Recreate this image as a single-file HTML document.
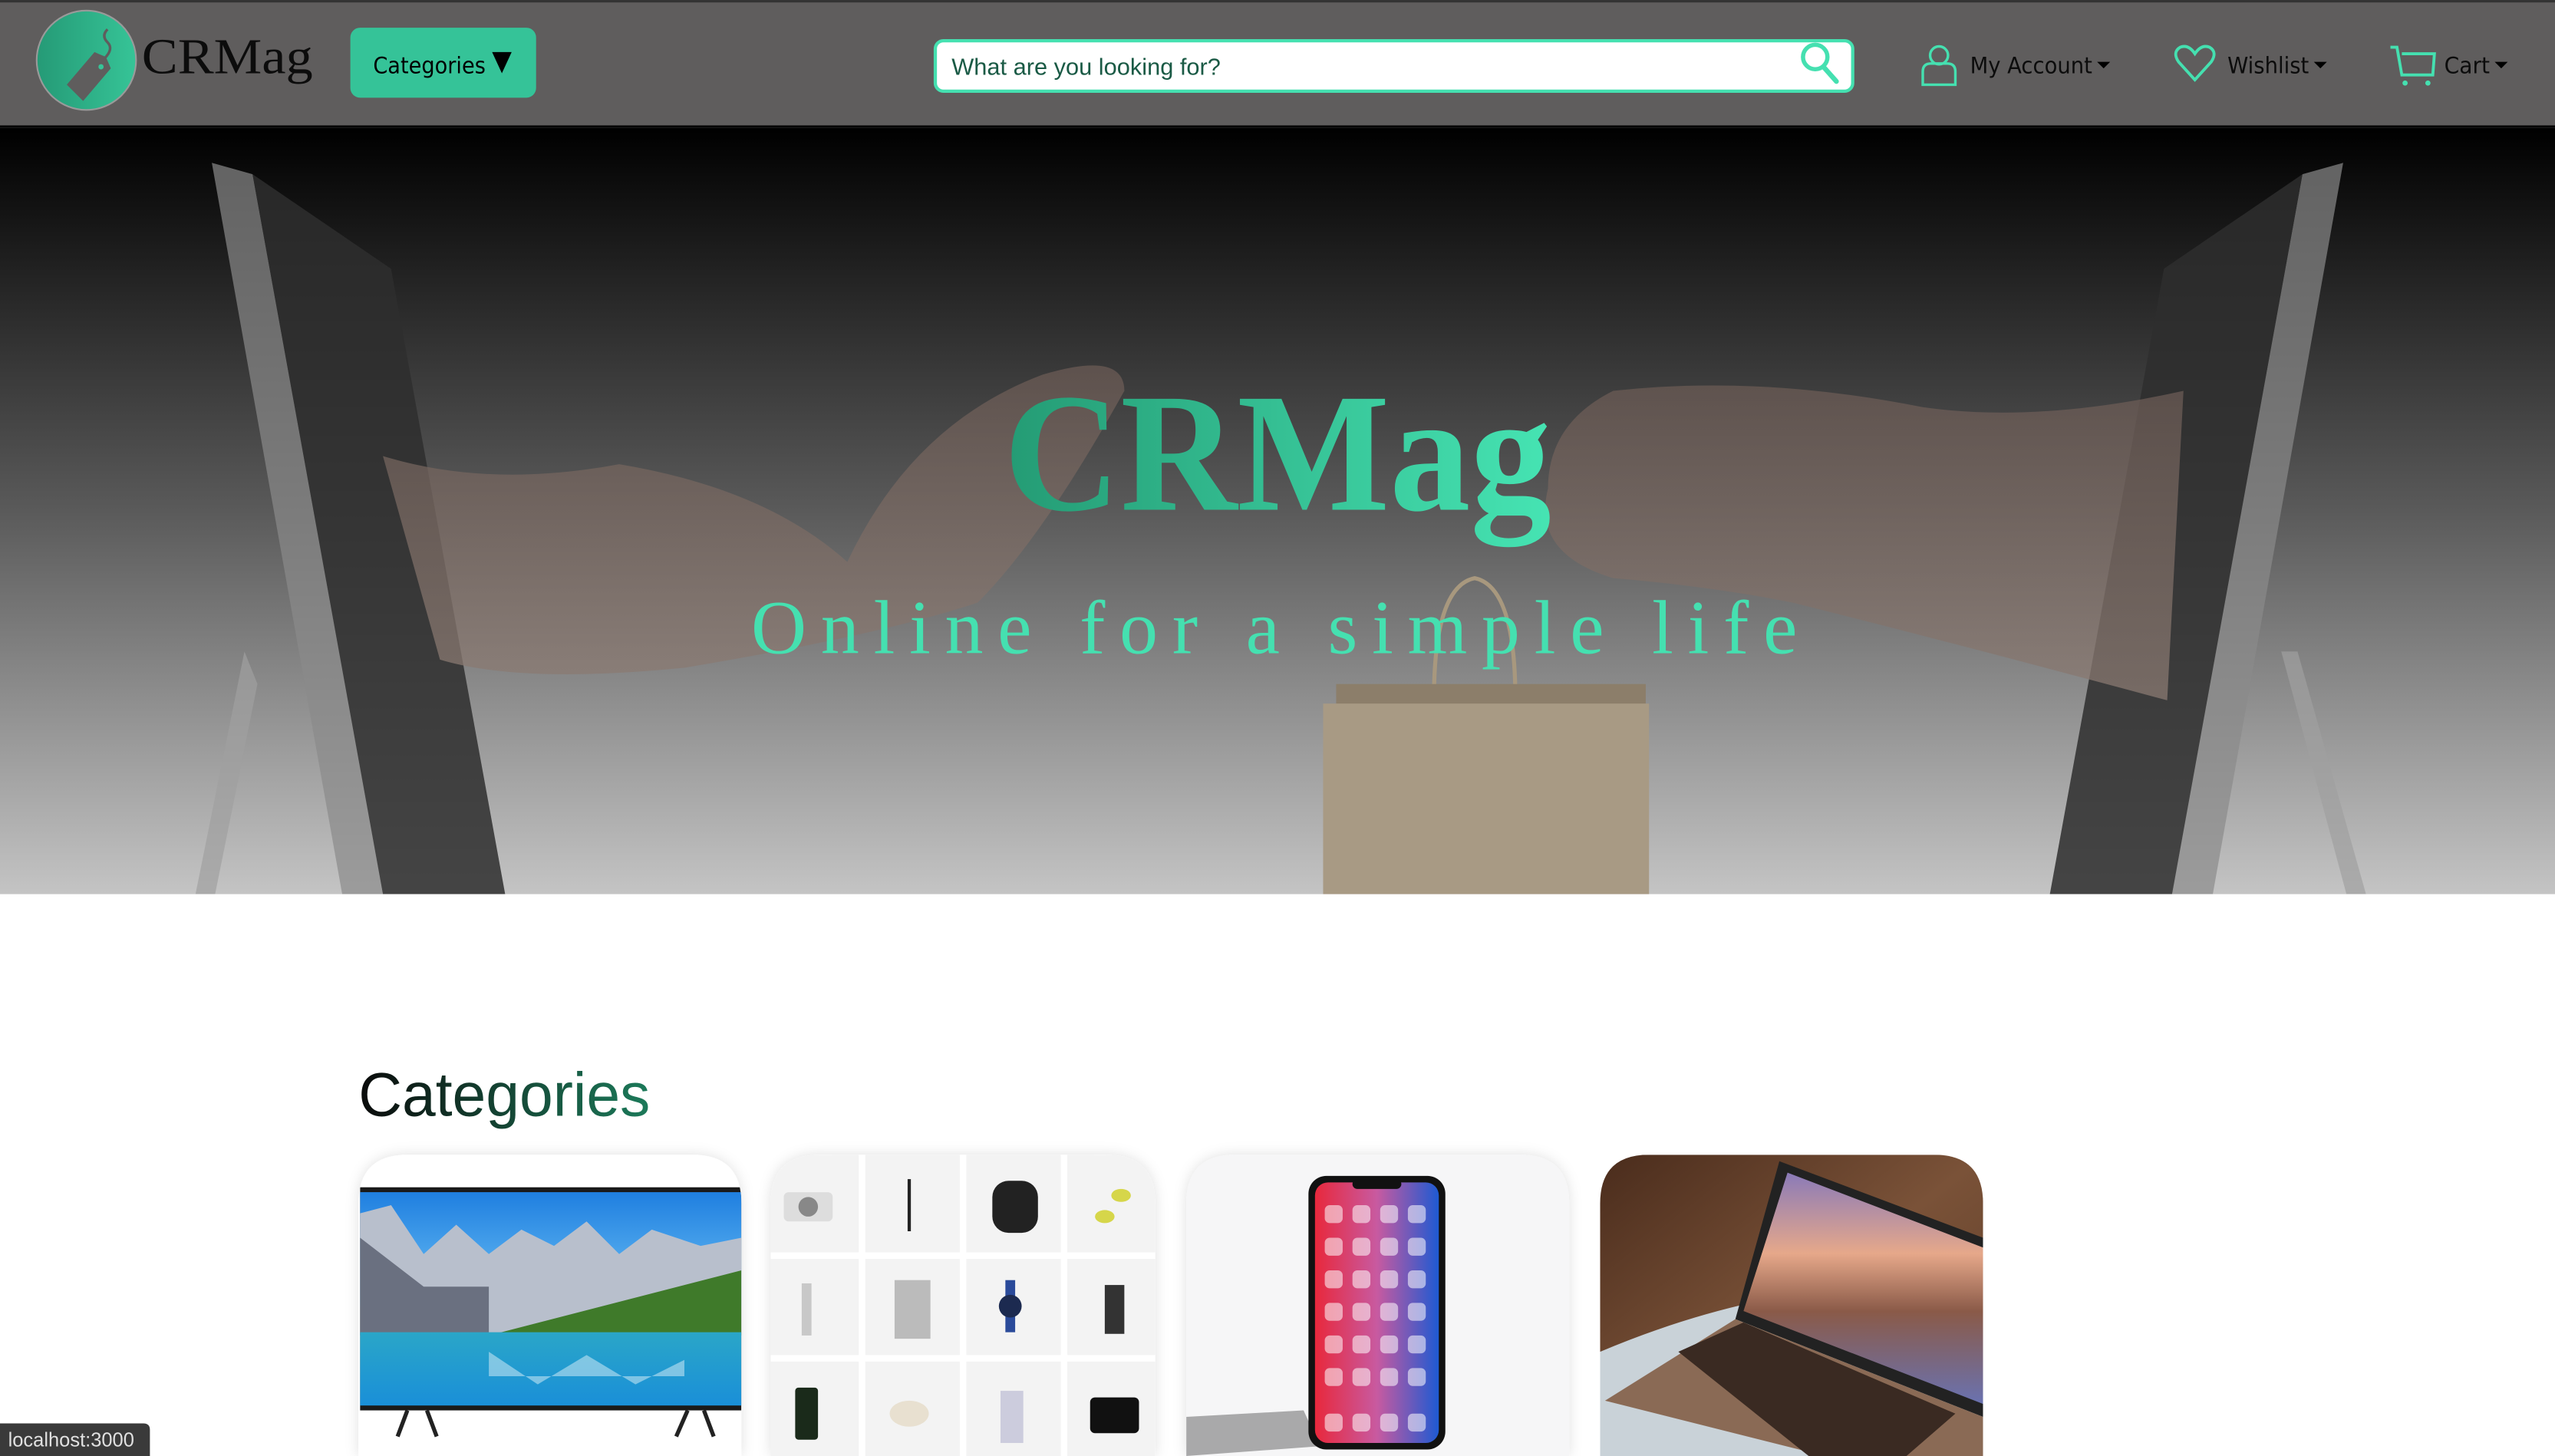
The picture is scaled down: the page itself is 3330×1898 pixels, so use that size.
<!DOCTYPE html>
<html><head><meta charset="utf-8"><style>
html,body{margin:0;padding:0;background:#fff;overflow:hidden}
svg{display:block}
</style></head><body>
<svg width="3330" height="1898" viewBox="0 0 1568 894" preserveAspectRatio="none" xmlns="http://www.w3.org/2000/svg">
<defs>
<linearGradient id="hero" x1="0" y1="0" x2="0" y2="1"><stop offset="0" stop-color="#000"/><stop offset="0.5" stop-color="#5a5a5a"/><stop offset="1" stop-color="#c4c4c4"/></linearGradient>
<linearGradient id="title" x1="0" y1="0" x2="1" y2="0"><stop offset="0" stop-color="#249b74"/><stop offset="1" stop-color="#46e4b3"/></linearGradient>
<linearGradient id="logo" x1="0" y1="0" x2="1" y2="0"><stop offset="0" stop-color="#259a76"/><stop offset="1" stop-color="#36c497"/></linearGradient>
<linearGradient id="heading" x1="0" y1="0" x2="1" y2="0"><stop offset="0" stop-color="#0a0a0a"/><stop offset="0.4" stop-color="#123a2c"/><stop offset="1" stop-color="#1c7a5a"/></linearGradient>
<linearGradient id="sky" x1="0" y1="0" x2="0" y2="1"><stop offset="0" stop-color="#1f7fe0"/><stop offset="1" stop-color="#6fc3f5"/></linearGradient>
<linearGradient id="lake" x1="0" y1="0" x2="0" y2="1"><stop offset="0" stop-color="#2aa6c8"/><stop offset="1" stop-color="#1a8fd8"/></linearGradient>
<linearGradient id="phone" x1="0" y1="0" x2="1" y2="0"><stop offset="0" stop-color="#e8283c"/><stop offset="0.5" stop-color="#c85aa0"/><stop offset="1" stop-color="#1e5ad2"/></linearGradient>
<linearGradient id="lapbg" x1="0" y1="0" x2="1" y2="1"><stop offset="0" stop-color="#4a2c1c"/><stop offset="0.5" stop-color="#7a5238"/><stop offset="1" stop-color="#5a3a26"/></linearGradient>
<linearGradient id="lapscr" x1="0" y1="0" x2="0" y2="1"><stop offset="0" stop-color="#8a7ab8"/><stop offset="0.35" stop-color="#e6a88a"/><stop offset="0.6" stop-color="#8a5a48"/><stop offset="1" stop-color="#6a72b0"/></linearGradient>
<linearGradient id="arm" x1="0" y1="0" x2="0" y2="1"><stop offset="0" stop-color="#6a5a54"/><stop offset="1" stop-color="#8a7a72"/></linearGradient>
<clipPath id="c1"><path d="M220 894V739Q220 709 250 709H425Q455 709 455 739V894Z"/></clipPath>
<clipPath id="c2"><path d="M473 894V739Q473 709 503 709H679Q709 709 709 739V894Z"/></clipPath>
<clipPath id="c3"><path d="M728 894V739Q728 709 758 709H933Q963 709 963 739V894Z"/></clipPath>
<clipPath id="c4"><path d="M982 894V739Q982 709 1012 709H1187Q1217 709 1217 739V894Z"/></clipPath>
<filter id="sh" x="-10%" y="-10%" width="120%" height="120%"><feDropShadow dx="0" dy="0" stdDeviation="4" flood-color="#000" flood-opacity="0.12"/></filter>
</defs>

<!-- NAV -->
<rect x="0" y="0" width="1568" height="78" fill="#5f5d5d"/>
<rect x="0" y="0" width="1568" height="1.5" fill="#333"/>
<rect x="0" y="77" width="1568" height="1.5" fill="#000"/>
<circle cx="53" cy="37" r="30.5" fill="url(#logo)" stroke="#9a9a9a" stroke-width="1"/>
<path d="M41 52 L58 32 L65 35 L68 42 L51 62 Z" fill="#5f5d5d"/>
<path d="M64 36 Q70 30 66 26 Q62 22 66 18" fill="none" stroke="#5f5d5d" stroke-width="1.6"/>
<circle cx="62" cy="41" r="1.6" fill="#36c497"/>
<text x="87" y="45" font-family="Liberation Serif, serif" font-size="31" fill="#0c0c0c" textLength="105" lengthAdjust="spacingAndGlyphs">CRMag</text>

<rect x="215" y="17" width="114" height="43" rx="6" fill="#35c398"/>
<text x="229" y="45" font-family="DejaVu Sans, sans-serif" font-size="14" fill="#000" textLength="69" lengthAdjust="spacingAndGlyphs">Categories</text>
<path d="M302 32h12l-6 13z" fill="#000"/>

<rect x="574" y="25" width="563" height="31" rx="5" fill="#fff" stroke="#45e0b0" stroke-width="2"/>
<text x="584" y="46" font-family="Liberation Sans, sans-serif" font-size="14.5" fill="#1a5a45">What are you looking for?</text>
<circle cx="1114" cy="35" r="7.5" fill="none" stroke="#45e0b0" stroke-width="2.6"/>
<path d="M1119 41l8 9" stroke="#45e0b0" stroke-width="3" stroke-linecap="round"/>

<circle cx="1190" cy="34" r="5.5" fill="none" stroke="#45e0b0" stroke-width="1.6"/>
<path d="M1180 52v-8q0-5 5-5h10q5 0 5 5v8z" fill="none" stroke="#45e0b0" stroke-width="1.6"/>
<text x="1209" y="45" font-family="DejaVu Sans, sans-serif" font-size="14" fill="#0c0c0c" textLength="75" lengthAdjust="spacingAndGlyphs">My Account</text>
<path d="M1287 38h8l-4 4z" fill="#000"/>

<path d="M1347 49 L1337 38 Q1333 32 1338 29 Q1343 27 1347 33 Q1351 27 1356 29 Q1361 32 1357 38 Z" fill="none" stroke="#45e0b0" stroke-width="1.8"/>
<text x="1367" y="45" font-family="DejaVu Sans, sans-serif" font-size="14" fill="#0c0c0c" textLength="50" lengthAdjust="spacingAndGlyphs">Wishlist</text>
<path d="M1420 38h8l-4 4z" fill="#000"/>

<path d="M1467 29h4l3 17h19l1-13h-20" fill="none" stroke="#45e0b0" stroke-width="1.8"/>
<circle cx="1476" cy="51" r="1.6" fill="#45e0b0"/><circle cx="1490" cy="51" r="1.6" fill="#45e0b0"/>
<text x="1500" y="45" font-family="DejaVu Sans, sans-serif" font-size="14" fill="#0c0c0c" textLength="28" lengthAdjust="spacingAndGlyphs">Cart</text>
<path d="M1531 38h8l-4 4z" fill="#000"/>

<!-- HERO -->
<rect x="0" y="78.5" width="1568" height="470.5" fill="url(#hero)"/>
<!-- left monitor -->
<path d="M130 100 L155 107 L235 549 L210 549 Z" fill="#8a8a8a" opacity="0.7"/>
<path d="M155 107 L240 165 L310 549 L235 549 Z" fill="#2e2e2e" opacity="0.85"/>
<path d="M150 400 L120 549 L132 549 L158 420 Z" fill="#a0a0a0" opacity="0.7"/>
<!-- right monitor -->
<path d="M1438 100 L1413 107 L1333 549 L1358 549 Z" fill="#8a8a8a" opacity="0.7"/>
<path d="M1413 107 L1328 165 L1258 549 L1333 549 Z" fill="#2e2e2e" opacity="0.85"/>
<path d="M1400 400 L1440 549 L1452 549 L1410 400 Z" fill="#a0a0a0" opacity="0.7"/>
<!-- arms -->
<path d="M235 280 Q300 300 380 285 Q470 300 520 345 Q560 260 640 230 Q690 215 690 240 Q640 330 600 370 Q540 390 420 410 Q320 420 270 405 Z" fill="url(#arm)" opacity="0.75"/>
<path d="M1340 240 Q1250 260 1180 250 Q1080 230 990 240 Q950 260 950 300 Q940 340 990 355 Q1050 360 1100 370 Q1200 395 1330 430 Z" fill="url(#arm)" opacity="0.75"/>
<!-- bag -->
<path d="M880 430 Q880 360 905 355 Q930 360 930 430" fill="none" stroke="#a8987e" stroke-width="2.5"/>
<rect x="820" y="420" width="190" height="20" fill="#8c7e6a"/>
<rect x="812" y="432" width="200" height="117" fill="#a89a84"/>
<!-- hero text -->
<text x="784" y="313" text-anchor="middle" font-family="Liberation Serif, serif" font-weight="bold" font-size="104" fill="url(#title)" textLength="336" lengthAdjust="spacingAndGlyphs">CRMag</text>
<text x="782" y="401" text-anchor="middle" font-family="Liberation Serif, serif" font-size="47" fill="#45e0b0" textLength="642" lengthAdjust="spacing">Online for a simple life</text>

<!-- CATEGORIES -->
<text x="220" y="685" font-family="Liberation Sans, sans-serif" font-size="38" fill="url(#heading)" textLength="179" lengthAdjust="spacingAndGlyphs">Categories</text>

<!-- card 1 TV -->
<g filter="url(#sh)"><path d="M220 894V739Q220 709 250 709H425Q455 709 455 739V894Z" fill="#fff"/></g>
<g clip-path="url(#c1)">
<rect x="221" y="729" width="234" height="137" fill="#1a1a1a"/>
<rect x="221" y="732" width="234" height="70" fill="url(#sky)"/>
<path d="M221 745 L240 740 L260 770 L280 752 L300 770 L320 755 L340 765 L360 750 L380 770 L400 755 L430 765 L455 760 L455 820 L221 820 Z" fill="#b8bfcc"/>
<path d="M221 760 L260 790 L300 790 L300 820 L221 820 Z" fill="#6a7080"/>
<path d="M300 820 L455 780 L455 820 Z" fill="#3f7a2a"/>
<rect x="221" y="818" width="234" height="45" fill="url(#lake)"/>
<path d="M300 830 L330 850 L360 832 L390 850 L420 835 L420 845 L300 845Z" fill="#bfe3f2" opacity="0.6"/>
<path d="M250 866 L244 882 M262 866 L268 882 M422 866 L415 882 M432 866 L438 882" stroke="#222" stroke-width="2.5"/>
</g>

<!-- card 2 grid -->
<g filter="url(#sh)"><path d="M473 894V739Q473 709 503 709H679Q709 709 709 739V894Z" fill="#fff"/></g>
<g clip-path="url(#c2)" fill="#f3f3f3">
<rect x="473" y="709" width="54" height="60"/><rect x="531" y="709" width="58" height="60"/><rect x="593" y="709" width="58" height="60"/><rect x="655" y="709" width="54" height="60"/>
<rect x="473" y="773" width="54" height="59"/><rect x="531" y="773" width="58" height="59"/><rect x="593" y="773" width="58" height="59"/><rect x="655" y="773" width="54" height="59"/>
<rect x="473" y="836" width="54" height="58"/><rect x="531" y="836" width="58" height="58"/><rect x="593" y="836" width="58" height="58"/><rect x="655" y="836" width="54" height="58"/>
<rect x="481" y="732" width="30" height="18" rx="3" fill="#ddd"/><circle cx="496" cy="741" r="6" fill="#888"/>
<rect x="557" y="724" width="2" height="32" fill="#222"/>
<rect x="609" y="725" width="28" height="32" rx="10" fill="#222"/>
<ellipse cx="688" cy="734" rx="6" ry="4" fill="#d6d64a"/><ellipse cx="678" cy="747" rx="6" ry="4" fill="#d6d64a"/>
<rect x="492" y="788" width="6" height="32" fill="#c8c8c8"/>
<rect x="549" y="786" width="22" height="36" fill="#bbb"/>
<rect x="617" y="786" width="6" height="32" fill="#2a4a9a"/><circle cx="620" cy="802" r="7" fill="#1c2a50"/>
<rect x="678" y="789" width="12" height="30" fill="#333"/>
<rect x="488" y="852" width="14" height="32" rx="2" fill="#1a2a1a"/>
<ellipse cx="558" cy="868" rx="12" ry="8" fill="#e8e0d0"/>
<rect x="614" y="854" width="14" height="32" fill="#ccd"/>
<rect x="669" y="858" width="30" height="22" rx="3" fill="#111"/>
</g>

<!-- card 3 phone -->
<g filter="url(#sh)"><path d="M728 894V739Q728 709 758 709H933Q963 709 963 739V894Z" fill="#f6f6f7"/></g>
<g clip-path="url(#c3)">
<path d="M728 870 L800 866 L810 888 L728 894Z" fill="#777" opacity="0.6"/>
<rect x="803" y="722" width="84" height="168" rx="11" fill="#111"/>
<rect x="807" y="726" width="76" height="160" rx="8" fill="url(#phone)"/>
<rect x="830" y="724" width="30" height="6" rx="3" fill="#111"/>
<g fill="#fff" opacity="0.55">
<rect x="813" y="740" width="11" height="11" rx="3"/><rect x="830" y="740" width="11" height="11" rx="3"/><rect x="847" y="740" width="11" height="11" rx="3"/><rect x="864" y="740" width="11" height="11" rx="3"/>
<rect x="813" y="760" width="11" height="11" rx="3"/><rect x="830" y="760" width="11" height="11" rx="3"/><rect x="847" y="760" width="11" height="11" rx="3"/><rect x="864" y="760" width="11" height="11" rx="3"/>
<rect x="813" y="780" width="11" height="11" rx="3"/><rect x="830" y="780" width="11" height="11" rx="3"/><rect x="847" y="780" width="11" height="11" rx="3"/><rect x="864" y="780" width="11" height="11" rx="3"/>
<rect x="813" y="800" width="11" height="11" rx="3"/><rect x="830" y="800" width="11" height="11" rx="3"/><rect x="847" y="800" width="11" height="11" rx="3"/><rect x="864" y="800" width="11" height="11" rx="3"/>
<rect x="813" y="820" width="11" height="11" rx="3"/><rect x="830" y="820" width="11" height="11" rx="3"/><rect x="847" y="820" width="11" height="11" rx="3"/><rect x="864" y="820" width="11" height="11" rx="3"/>
<rect x="813" y="840" width="11" height="11" rx="3"/><rect x="830" y="840" width="11" height="11" rx="3"/><rect x="847" y="840" width="11" height="11" rx="3"/><rect x="864" y="840" width="11" height="11" rx="3"/>
<rect x="813" y="868" width="11" height="11" rx="3"/><rect x="830" y="868" width="11" height="11" rx="3"/><rect x="847" y="868" width="11" height="11" rx="3"/><rect x="864" y="868" width="11" height="11" rx="3"/>
</g>
</g>

<!-- card 4 laptop -->
<g clip-path="url(#c4)">
<rect x="982" y="709" width="235" height="185" fill="url(#lapbg)"/>
<path d="M982 830 Q1100 780 1217 790 L1217 894 L982 894Z" fill="#c9d2d8"/>
<path d="M1092 713 L1217 760 L1217 870 L1065 810 Z" fill="#222"/>
<path d="M1097 720 L1217 766 L1217 862 L1070 805 Z" fill="url(#lapscr)"/>
<path d="M1065 810 L1217 870 L1217 894 L1120 894 L985 860 Z" fill="#8a6a55"/>
<path d="M1030 830 L1070 812 L1200 868 L1170 894 L1110 894 Z" fill="#3a2a22"/>
</g>

<!-- status bar -->
<path d="M0 874H88Q92 874 92 878V894H0Z" fill="#3a3a3a"/>
<text x="5" y="888" font-family="Liberation Sans, sans-serif" font-size="12" fill="#e0e0e0">localhost:3000</text>
</svg>
</body></html>
